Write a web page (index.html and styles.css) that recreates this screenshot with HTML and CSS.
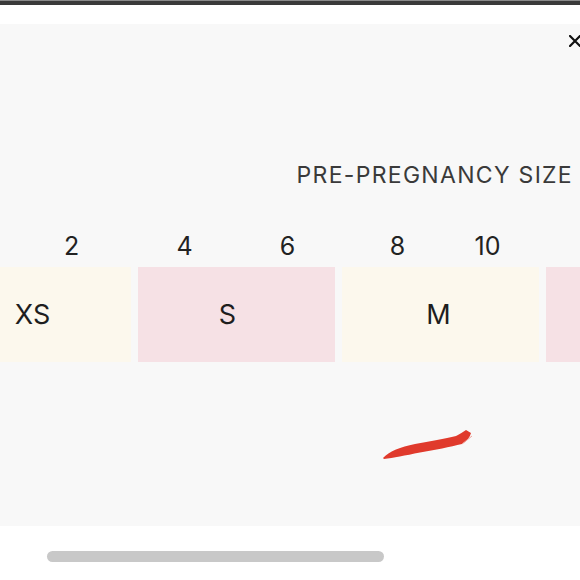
FILE: index.html
```html
<!DOCTYPE html>
<html>
<head>
<meta charset="utf-8">
<link rel="stylesheet" href="styles.css">
</head>
<body>
<div class="topbar"></div>
<div class="gap-top"></div>
<section class="panel">
  <button class="close" aria-label="Close">
    <svg width="12" height="12" viewBox="0 0 12 12"><path d="M1 1 L11 11 M11 1 L1 11" stroke="#111" stroke-width="2.2" stroke-linecap="square"/></svg>
  </button>
  <h2 class="title">PRE-PREGNANCY SIZE</h2>
  <div class="numbers">
    <span class="num n1">2</span>
    <span class="num n2">4</span>
    <span class="num n3">6</span>
    <span class="num n4">8</span>
    <span class="num n5">10</span>
  </div>
  <div class="blocks">
    <div class="block cream xs">XS</div>
    <div class="block pink s">S</div>
    <div class="block cream m">M</div>
    <div class="block pink l"></div>
  </div>
  <svg class="scribble" width="100" height="40" viewBox="375 425 100 40">
    <path d="M383 458 C 390 451, 400 447, 415 444 C 430 441, 445 439, 456 436 C 460 434, 463 432, 466 430 L 471 433 C 470 437, 467 441, 462 444 C 450 447, 435 450, 420 452.5 C 405 455.5, 393 458, 384 459 Z" fill="#e03a2c"/>
    <path d="M462 444 L 472 436" stroke="#f0a29a" stroke-width="1" fill="none"/>
  </svg>
</section>
<div class="bottom">
  <div class="scrollbar"></div>
</div>
</body>
</html>
```

FILE: styles.css
```css
html, body {
  margin: 0;
  padding: 0;
  background: #ffffff;
  width: 580px;
  height: 580px;
  overflow: hidden;
  font-family: Inter, "Noto Sans", "Liberation Sans", sans-serif;
}
.topbar {
  height: 4px;
  background: #3a3a3a;
  border-top: 1px solid #8a8a8a;
}
.gap-top {
  height: 19px;
  background: #ffffff;
}
.panel {
  position: relative;
  height: 502px;
  background: #f8f8f8;
  overflow: hidden;
}
.close {
  position: absolute;
  top: 11px;
  left: 569px;
  border: 0;
  background: transparent;
  padding: 0;
  width: 12px;
  height: 12px;
  display: block;
}
.close svg {
  display: block;
}
.title {
  margin: 0;
  padding-top: 137px;
  padding-right: 7px;
  text-align: right;
  font-size: 23px;
  font-weight: 400;
  letter-spacing: 1.3px;
  color: #3a3a3a;
  line-height: 28px;
}
.numbers {
  display: grid;
  grid-template-columns: 51px 41px 72px 41px 62px 41px 69px 41px 49px 41px;
  margin-top: 41px;
  height: 32px;
}
.num {
  font-size: 25px;
  line-height: 32px;
  text-align: center;
  color: #222;
}
.n1 { grid-column: 2; }
.n2 { grid-column: 4; }
.n3 { grid-column: 6; }
.n4 { grid-column: 8; }
.n5 { grid-column: 10; }
.blocks {
  display: flex;
  gap: 7px;
  margin-left: -66px;
  margin-top: 5px;
}
.block {
  flex: 0 0 197px;
  height: 95px;
  display: flex;
  align-items: center;
  justify-content: center;
  font-size: 27px;
  color: #1e1e1e;
}
.cream { background: #fcf8ed; }
.pink { background: #f6e1e5; }
.s { padding-right: 18px; box-sizing: border-box; }
.m { padding-right: 4px; box-sizing: border-box; }
.scribble {
  position: absolute;
  left: 375px;
  top: 401px;
}
.bottom {
  height: 54px;
  padding-top: 25px;
  padding-left: 47px;
  box-sizing: border-box;
}
.scrollbar {
  width: 337px;
  height: 11px;
  border-radius: 6px;
  background: #c8c8c8;
}
```
